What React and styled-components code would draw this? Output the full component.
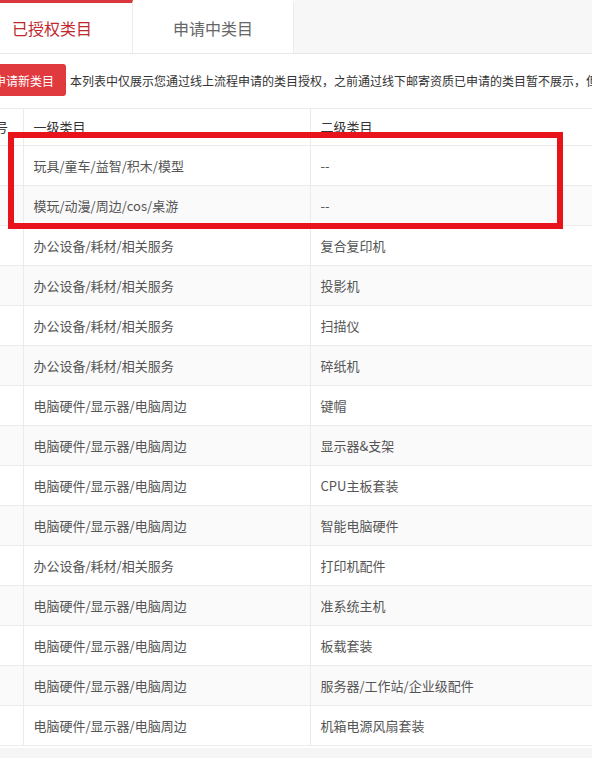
import React from 'react';
import styled, { createGlobalStyle } from 'styled-components';

const GlobalStyle = createGlobalStyle`
  html, body {
    margin: 0;
    padding: 0;
    background: #ffffff;
    overflow: hidden;
  }
  body {
    font-family: "Noto Sans CJK SC", "Noto Sans", sans-serif;
  }
`;

const Page = styled.div`
  position: relative;
  width: 900px;
  margin-left: -28px;
  background: #f5f5f5;
  min-height: 758px;
`;

const TabBar = styled.div`
  display: flex;
  height: 53px;
  background: #f7f7f7;
  border-bottom: 1px solid #e8e8e8;
`;

const Tab = styled.div`
  width: 161px;
  box-sizing: border-box;
  display: flex;
  align-items: center;
  justify-content: center;
  background: #ffffff;
  border-right: 1px solid #ececec;
  border-top: 3px solid ${p => (p.active ? '#d9363e' : '#ffffff')};
  padding-bottom: 1px;
  font-size: 16px;
  color: ${p => (p.active ? '#c0282d' : '#666666')};
`;

const Panel = styled.div`
  background: #ffffff;
  padding-bottom: 2px;
`;

const Toolbar = styled.div`
  display: flex;
  align-items: center;
  gap: 4px;
  padding: 10px 10px 12px 10px;
  white-space: nowrap;
`;

const Button = styled.div`
  height: 32px;
  padding: 0 12px;
  display: flex;
  align-items: center;
  background: #e0393e;
  color: #ffffff;
  font-size: 12px;
  border-radius: 3px;
`;

const Note = styled.span`
  font-size: 12px;
  color: #333333;
`;

const Table = styled.table`
  width: 100%;
  border-collapse: collapse;
  border-top: 1px solid #ebebeb;
  font-size: 13px;
  line-height: 18px;
`;

const HeadCell = styled.th`
  height: 37px;
  padding: 0 10px;
  text-align: left;
  font-weight: normal;
  color: #333333;
  border-bottom: 1px solid #ebebeb;
  border-right: 1px solid #ebebeb;
  width: ${p => p.w || 'auto'};
  box-sizing: border-box;
`;

const Row = styled.tr`
  background: ${p => (p.striped ? '#fafafa' : '#ffffff')};
`;

const Cell = styled.td`
  height: 39px;
  padding: 0 10px;
  color: #555555;
  border-bottom: 1px solid #ebebeb;
  border-right: 1px solid #ebebeb;
`;

const Marker = styled.div`
  position: absolute;
  left: 36px;
  top: 132px;
  width: 555px;
  height: 97px;
  box-sizing: border-box;
  border: 6px solid #e8131b;
  pointer-events: none;
`;

const rows = [
  ['玩具/童车/益智/积木/模型', '--'],
  ['模玩/动漫/周边/cos/桌游', '--'],
  ['办公设备/耗材/相关服务', '复合复印机'],
  ['办公设备/耗材/相关服务', '投影机'],
  ['办公设备/耗材/相关服务', '扫描仪'],
  ['办公设备/耗材/相关服务', '碎纸机'],
  ['电脑硬件/显示器/电脑周边', '键帽'],
  ['电脑硬件/显示器/电脑周边', '显示器&支架'],
  ['电脑硬件/显示器/电脑周边', 'CPU主板套装'],
  ['电脑硬件/显示器/电脑周边', '智能电脑硬件'],
  ['办公设备/耗材/相关服务', '打印机配件'],
  ['电脑硬件/显示器/电脑周边', '准系统主机'],
  ['电脑硬件/显示器/电脑周边', '板载套装'],
  ['电脑硬件/显示器/电脑周边', '服务器/工作站/企业级配件'],
  ['电脑硬件/显示器/电脑周边', '机箱电源风扇套装'],
];

export default function App() {
  return (
    <>
      <GlobalStyle />
      <Page>
        <TabBar>
          <Tab active>已授权类目</Tab>
          <Tab>申请中类目</Tab>
        </TabBar>
        <Panel>
          <Toolbar>
            <Button>申请新类目</Button>
            <Note>本列表中仅展示您通过线上流程申请的类目授权，之前通过线下邮寄资质已申请的类目暂不展示，但不影响您正常发布商品。</Note>
          </Toolbar>
          <Table>
            <thead>
              <tr>
                <HeadCell w="51px">序号</HeadCell>
                <HeadCell w="287px">一级类目</HeadCell>
                <HeadCell>二级类目</HeadCell>
              </tr>
            </thead>
            <tbody>
              {rows.map((r, i) => (
                <Row key={i} striped={i % 2 === 1}>
                  <Cell>{i + 1}</Cell>
                  <Cell>{r[0]}</Cell>
                  <Cell>{r[1]}</Cell>
                </Row>
              ))}
            </tbody>
          </Table>
        </Panel>
        <Marker />
      </Page>
    </>
  );
}
